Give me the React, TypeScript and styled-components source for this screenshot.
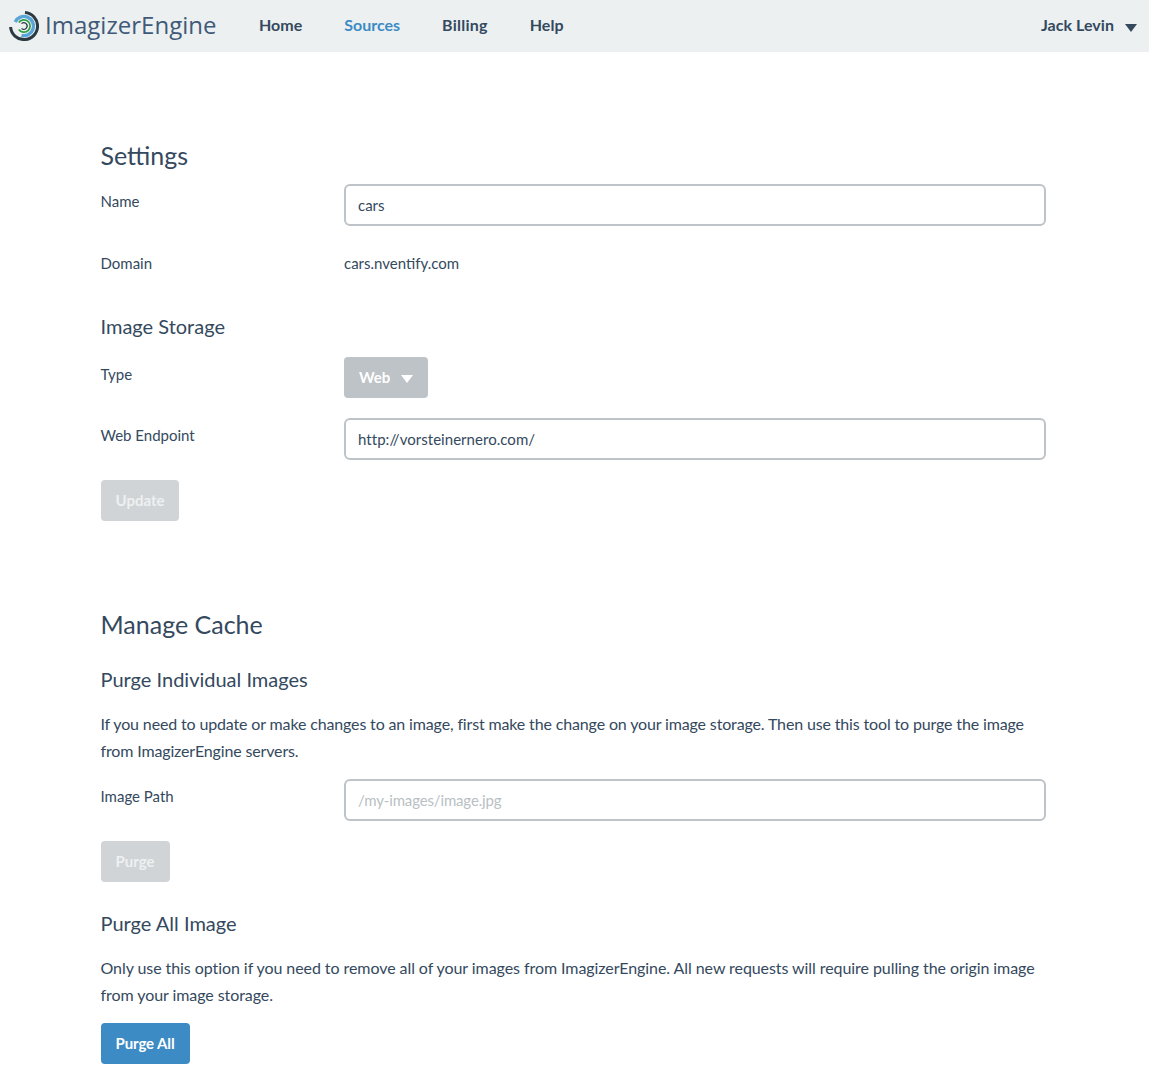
import React from "react";
import styled, { createGlobalStyle } from "styled-components";

const Global = createGlobalStyle`
  html, body { margin: 0; padding: 0; background: #fff; }
  body { font-family: Lato, "Liberation Sans", sans-serif; color: #34495e; font-size: 15px; }
  * { box-sizing: border-box; }
`;

const NavBar = styled.header`
  height: 52px;
  background: #ecf0f1;
  display: flex;
  align-items: center;
  padding: 0 12px 0 9px;
`;
const Brand = styled.div`
  display: flex;
  align-items: center;
  gap: 6px;
  width: 250px;
`;
const BrandName = styled.span`
  font-family: "Open Sans", sans-serif;
  font-size: 24px;
  font-weight: 400;
  color: #3f5a78;
  letter-spacing: 0.02px;
  padding-bottom: 3px;
`;
const NavLinks = styled.nav`
  display: flex;
  gap: 42px;
  flex: 1;
  padding-bottom: 3px;
`;
const NavLink = styled.a<{ $active?: boolean; $tracking?: number }>`
  font-size: 16px;
  font-weight: 700;
  letter-spacing: ${(p) => p.$tracking ?? 0}px;
  color: ${(p) => (p.$active ? "#3d8bc4" : "#34495e")};
`;
const User = styled.div`
  display: flex;
  align-items: center;
  gap: 11px;
  font-size: 16px;
  font-weight: 700;
  letter-spacing: 0.05px;
  color: #34495e;
`;
const UserName = styled.span`
  padding-bottom: 3px;
`;
const Caret = styled.span<{ $color: string }>`
  width: 0;
  height: 0;
  margin-top: 4px;
  border-left: 6px solid transparent;
  border-right: 6px solid transparent;
  border-top: 8px solid ${(p) => p.$color};
`;

const Main = styled.main`
  padding: 88px 103px 0 100.5px;
`;
const Section = styled.section`
  display: flex;
  flex-direction: column;
`;
const H2 = styled.h2`
  margin: 0;
  font-size: 25px;
  line-height: 30px;
  font-weight: 400;
  color: #34495e;
`;
const SettingsTitle = styled(H2)`
  margin-bottom: 14px;
`;
const CacheTitle = styled(H2)`
  margin-top: 88px;
`;
const H3 = styled.h3<{ $top: number }>`
  margin: ${(p) => p.$top}px 0 0;
  font-size: 20px;
  line-height: 26px;
  font-weight: 400;
  color: #34495e;
`;
const Row = styled.div<{ $top?: number }>`
  display: grid;
  grid-template-columns: 243.5px 702px;
  margin-top: ${(p) => p.$top ?? 0}px;
  align-items: start;
  justify-items: start;
`;
const Label = styled.div`
  font-size: 15px;
  line-height: 20px;
  padding-top: 7px;
`;
const StaticValue = styled.div`
  font-size: 15px;
  line-height: 20px;
  padding-top: 7px;
`;
const Input = styled.input<{ $tracking?: number }>`
  display: block;
  width: 100%;
  height: 42px;
  border: 2px solid #bdc3c7;
  border-radius: 6px;
  background: #fff;
  padding: 0 12px;
  font: 400 15px Lato, sans-serif;
  letter-spacing: ${(p) => p.$tracking ?? 0}px;
  color: #34495e;
  outline: none;
  &::placeholder { color: #b9bfc4; opacity: 1; }
`;
const Button = styled.button<{ $bg: string; $fg: string; $top?: number; $tracking?: number }>`
  display: inline-flex;
  align-items: center;
  justify-content: center;
  gap: 10px;
  align-self: flex-start;
  height: 41px;
  padding: 0 15px 2px;
  margin-top: ${(p) => p.$top ?? 0}px;
  border: 0;
  border-radius: 4px;
  background: ${(p) => p.$bg};
  color: ${(p) => p.$fg};
  font: 700 15px Lato, sans-serif;
  letter-spacing: ${(p) => p.$tracking ?? 0}px;
`;
const ButtonCaret = styled(Caret)`
  margin-left: 1px;
`;
const Paragraph = styled.p<{ $top: number; $tracking: number }>`
  margin: ${(p) => p.$top}px 0 0;
  font-size: 16px;
  line-height: 27px;
  width: 945px;
  letter-spacing: ${(p) => p.$tracking}px;
  color: #34495e;
`;

const Logo = () => (
  <svg width="30" height="30" viewBox="0 0 30 30" fill="none">
    <path d="M16 1.6 A13.5 13.5 0 1 1 1.6 16" stroke="#2b3a42" strokeWidth="3" />
    <path d="M6.2 11 A9.6 9.6 0 1 1 12.5 24.3" stroke="#5aa5d8" strokeWidth="3.4" />
    <path d="M9.8 11.5 A6.2 6.2 0 1 1 9.8 18.5" stroke="#2f9e44" strokeWidth="1.7" />
    <path d="M12.5 12.6 A3.3 3.3 0 1 1 12.5 17.4" stroke="#2b3a42" strokeWidth="1.2" />
  </svg>
);

export default function App() {
  return (
    <>
      <Global />
      <NavBar>
        <Brand>
          <Logo />
          <BrandName>ImagizerEngine</BrandName>
        </Brand>
        <NavLinks>
          <NavLink>Home</NavLink>
          <NavLink $active>Sources</NavLink>
          <NavLink $tracking={0.25}>Billing</NavLink>
          <NavLink>Help</NavLink>
        </NavLinks>
        <User>
          <UserName>Jack Levin</UserName>
          <Caret $color="#34495e" />
        </User>
      </NavBar>
      <Main>
        <Section>
          <SettingsTitle>Settings</SettingsTitle>
          <Row>
            <Label>Name</Label>
            <Input defaultValue="cars" />
          </Row>
          <Row $top={20}>
            <Label>Domain</Label>
            <StaticValue>cars.nventify.com</StaticValue>
          </Row>
          <H3 $top={40}>Image Storage</H3>
          <Row $top={18}>
            <Label>Type</Label>
            <Button $bg="#bdc3c7" $fg="#fff">
              Web
              <ButtonCaret $color="#fff" />
            </Button>
          </Row>
          <Row $top={20}>
            <Label>Web Endpoint</Label>
            <Input $tracking={0.04} defaultValue="http://vorsteinernero.com/" />
          </Row>
          <Button $bg="#d0d4d7" $fg="#eef0f1" $top={20}>Update</Button>
        </Section>
        <Section>
          <CacheTitle>Manage Cache</CacheTitle>
          <H3 $top={27}>Purge Individual Images</H3>
          <Paragraph $top={18} $tracking={-0.145}>
            If you need to update or make changes to an image, first make the change on your image storage. Then use this tool to purge the image from ImagizerEngine servers.
          </Paragraph>
          <Row $top={15}>
            <Label>Image Path</Label>
            <Input $tracking={-0.15} placeholder="/my-images/image.jpg" />
          </Row>
          <Button $bg="#d0d4d7" $fg="#eef0f1" $top={20}>Purge</Button>
          <H3 $top={28}>Purge All Image</H3>
          <Paragraph $top={18} $tracking={-0.07}>
            Only use this option if you need to remove all of your images from ImagizerEngine. All new requests will require pulling the origin image from your image storage.
          </Paragraph>
          <Button $bg="#3d8bc4" $fg="#fff" $top={15} $tracking={-0.1}>Purge All</Button>
        </Section>
      </Main>
    </>
  );
}
